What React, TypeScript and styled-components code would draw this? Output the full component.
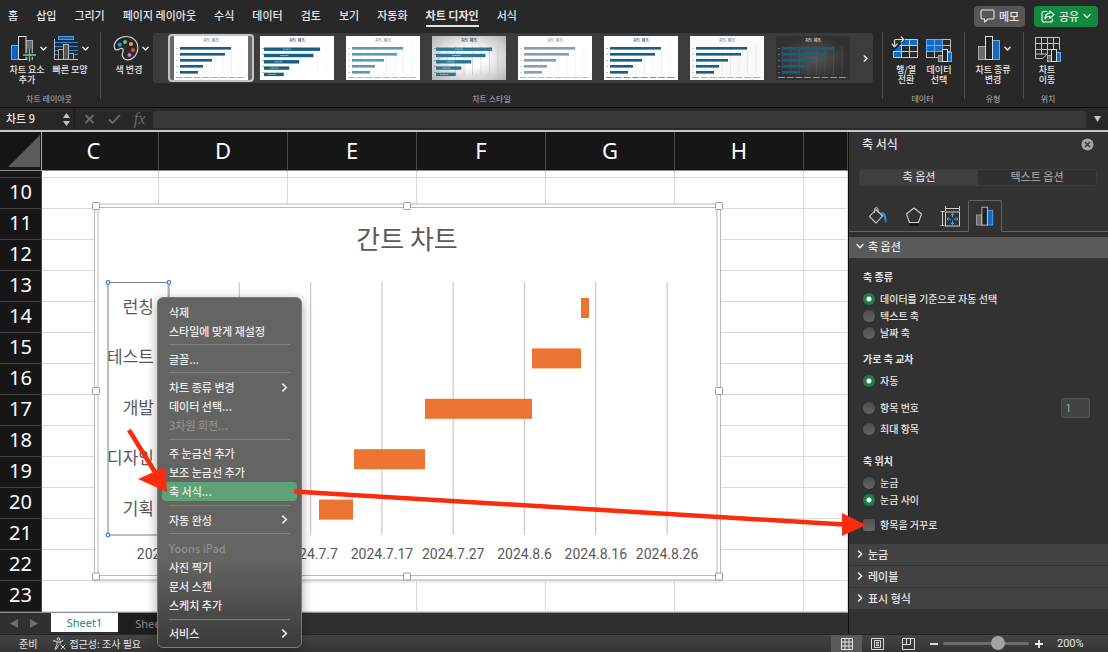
import React from "react";
import styled, { createGlobalStyle, css } from "styled-components";

const GlobalStyle = createGlobalStyle`
  *, *::before, *::after { box-sizing: border-box; }
  body {
    margin: 0;
    background: #282828;
    color: #e6e6e6;
    font-family: "Noto Sans CJK KR", "Noto Sans", sans-serif;
    font-size: 11px;
    line-height: 16px;
  }
  button, input { font: inherit; color: inherit; margin: 0; padding: 0; border: 0; background: none; }
  svg { display: block; flex: none; }
`;

const latin = `Inter, "Noto Sans CJK KR", sans-serif`;

/* ---------- window frame ---------- */

const Window = styled.div`
  position: relative;
  display: flex;
  flex-direction: column;
  min-height: 100vh;
  overflow: hidden;
`;

const TabBar = styled.header`
  display: flex;
  align-items: center;
  justify-content: space-between;
  height: 32px;
  padding: 0 10px 0 8px;
`;

const Tabs = styled.nav`
  display: flex;
  gap: 18px;
`;

const Tab = styled.button<{ $active?: boolean }>`
  height: 21px;
  white-space: nowrap;
  font-weight: ${(p) => (p.$active ? 700 : 500)};
  border-bottom: 2px solid ${(p) => (p.$active ? "#e4e4e4" : "transparent")};
`;

const Actions = styled.div`
  display: flex;
  gap: 9px;
`;

const ActionButton = styled.button<{ $primary?: boolean }>`
  display: flex;
  align-items: center;
  justify-content: center;
  gap: 4px;
  width: ${(p) => (p.$primary ? 64 : 51)}px;
  height: 21px;
  border-radius: 4px;
  white-space: nowrap;
  font-weight: 500;
  background: ${(p) => (p.$primary ? "#12893e" : "#565656")};
`;

/* ---------- ribbon ---------- */

const Ribbon = styled.section`
  display: flex;
  height: 76px;
  border-bottom: 1px solid #0c0c0c;
`;

const Group = styled.div<{ $width?: number }>`
  display: flex;
  flex-direction: column;
  justify-content: space-between;
  ${(p) => (p.$width ? css`flex: none; width: ${p.$width}px;` : css`flex: 1; min-width: 0;`)}
  height: 75px;
  padding-bottom: 2px;
`;

const Divider = styled.div`
  flex: none;
  width: 1px;
  height: 67px;
  background: #4c4c4c;
`;

const GroupBody = styled.div<{ $pad?: number; $gap?: number }>`
  display: flex;
  gap: ${(p) => p.$gap ?? 1}px;
  padding-left: ${(p) => p.$pad ?? 8}px;
`;

const GroupLabel = styled.div<{ $shift?: number }>`
  padding-right: ${(p) => p.$shift ?? 0}px;
  text-align: center;
  font-size: 8px;
  line-height: 12px;
  color: #b4b4b4;
`;

const Tool = styled.button<{ $width: number; $inset?: number }>`
  display: flex;
  flex-direction: column;
  gap: 3px;
  width: ${(p) => p.$width}px;
  padding-top: 3px;
  text-align: left;

  > span:first-child {
    display: flex;
    align-items: center;
    gap: 3px;
    padding-left: ${(p) => p.$inset ?? 4}px;
  }
  > span:last-child {
    width: 38px;
    text-align: center;
    white-space: pre;
    font-size: 9px;
    line-height: 10px;
    font-weight: 500;
  }
`;

const Gallery = styled.div`
  display: flex;
  align-items: center;
  justify-content: space-between;
  flex: 1;
  min-width: 0;
  height: 50px;
  margin: 1px 9px 0 2px;
  padding-left: 15px;
  border-radius: 3px;
  background: #3c3c3c;
  overflow: hidden;
`;

const ThumbRow = styled.div`
  display: flex;
  min-width: 0;
  overflow: hidden;
`;

const ThumbButton = styled.button<{ $selected?: boolean }>`
  flex: none;
  width: 86px;
  height: 48px;
  padding: 0 4px;
  border: 2px solid ${(p) => (p.$selected ? "#c4c4c4" : "transparent")};
  border-radius: 4px;
  background: ${(p) => (p.$selected ? "#6a6a6a" : "none")};
`;

const MoreButton = styled.button`
  display: flex;
  align-items: center;
  justify-content: center;
  width: 15px;
  height: 100%;
`;

/* ---------- formula bar ---------- */

const FormulaBar = styled.section`
  display: flex;
  align-items: center;
  height: 24px;
  border-bottom: 2px solid #c6c6c6;
`;

const NameBox = styled.input`
  width: 59px;
  height: 20px;
  padding: 0 0 2px 6px;
  font-weight: 500;
  outline: none;
`;

const Stepper = styled.button`
  display: flex;
  flex-direction: column;
  align-items: center;
  justify-content: center;
  gap: 3px;
  width: 16px;
  height: 22px;
  margin-right: 2px;
  border-right: 1px solid #1c1c1c;
`;

const FormulaButton = styled.button`
  display: flex;
  align-items: center;
  justify-content: center;
  width: 25px;
  height: 20px;
  color: #6a6a6a;
  font: italic 16px "Liberation Serif", serif;
`;

const FormulaInput = styled.input`
  flex: 1;
  min-width: 0;
  height: 17px;
  margin-left: 1px;
  border-radius: 2px;
  background: #393939;
`;

const ExpandButton = styled.button`
  display: flex;
  align-items: center;
  justify-content: center;
  width: 22px;
  height: 20px;
`;

/* ---------- worksheet ---------- */

const Main = styled.main`
  display: flex;
  flex: 1;
`;

const Workbook = styled.section`
  position: relative;
  display: flex;
  flex-direction: column;
  flex: 1;
  min-width: 0;
  overflow: hidden;
`;

const Grid = styled.table`
  width: 100%;
  table-layout: fixed;
  border-collapse: separate;
  border-spacing: 0;
  background: #fff;
  font-family: "Noto Sans", sans-serif;
  color: #fff;

  th, td { padding: 0; font-weight: 400; overflow: hidden; }
  thead th {
    height: 39px;
    background: #161616;
    border-right: 1px solid #4a4a4a;
    border-bottom: 1px solid #8c8c8c;
    padding-bottom: 2px;
    font-size: 22px;
    line-height: 30px;
  }
  thead th:first-child { border-right-color: #b0b0b0; padding: 0 0 0 8px; }
  tbody th {
    height: 31px;
    background: #161616;
    border-bottom: 1px solid #444;
    border-right: 1px solid #444;
    padding-bottom: 2px;
    font-size: 20px;
    line-height: 28px;
  }
  tbody td { border-right: 1px solid #dadada; border-bottom: 1px solid #dadada; }
  tbody tr:first-child > * { height: 7px; padding: 0; }
`;

const ClippedHeader = styled.th`
  && { padding-right: 13px; }
`;

const ChartObject = styled.figure`
  position: absolute;
  top: 70px;
  left: 92px;
  margin: 0;
`;

const SheetTabs = styled.div`
  display: flex;
  flex: 1;
  min-height: 22px;
  background: #303030;
  border-top: 1px solid #8f8f8f;
`;

const SheetNav = styled.div`
  display: flex;
  align-items: center;
  gap: 12px;
  width: 51px;
  height: 21px;
  padding-left: 10px;
`;

const SheetTab = styled.button<{ $active?: boolean }>`
  width: ${(p) => (p.$active ? 67 : 70)}px;
  height: ${(p) => (p.$active ? 19 : 21)}px;
  font-family: "Noto Sans", sans-serif;
  font-size: 11px;
  color: ${(p) => (p.$active ? "#2c8a55" : "#8c8c8c")};
  background: ${(p) => (p.$active ? "#fff" : "#1e1e1e")};
`;

/* ---------- format panel ---------- */

const Panel = styled.aside`
  flex: none;
  width: 260px;
  border-left: 1px solid #0d0d0d;
  background: #323232;
`;

const PanelHead = styled.div`
  display: flex;
  align-items: center;
  justify-content: space-between;
  height: 24px;
  padding: 0 14px 0 13px;
  font-size: 12px;
  font-weight: 500;
`;

const CloseButton = styled.button`
  display: flex;
`;

const Segments = styled.div`
  display: flex;
  height: 17px;
  margin: 13px 11px 0 10px;
  border-radius: 4px;
  border: 1px solid #3d3d3d;
  overflow: hidden;
`;

const Segment = styled.button<{ $active?: boolean }>`
  flex: 1;
  padding-bottom: 3px;
  line-height: 12px;
  font-weight: 500;
  color: ${(p) => (p.$active ? "#d6d6d6" : "#9c9c9c")};
  background: ${(p) => (p.$active ? "#3f3f3f" : "#303030")};
`;

const IconTabs = styled.div`
  display: flex;
  height: 32px;
  margin-top: 14px;
  padding-left: 11px;
  border-bottom: 1px solid #626262;
`;

const IconTab = styled.button<{ $active?: boolean }>`
  display: flex;
  align-items: center;
  justify-content: center;
  width: 36px;
  height: 32px;
  ${(p) =>
    p.$active &&
    css`
      width: 34px;
      border: 1px solid #626262;
      border-bottom-color: #323232;
      border-radius: 2px 2px 0 0;
    `}
`;

const SectionButton = styled.button<{ $open?: boolean }>`
  display: flex;
  align-items: center;
  gap: 4px;
  width: 100%;
  height: ${(p) => (p.$open ? 21 : 22)}px;
  margin-top: ${(p) => (p.$open ? 5 : 0)}px;
  padding: 0 0 2px 7px;
  font-weight: 500;
  background: ${(p) => (p.$open ? "#5a5a5a" : "#424242")};
  border-bottom: 1px solid ${(p) => (p.$open ? "#5a5a5a" : "#343434")};

  svg { width: 8px; }
`;

const Options = styled.div`
  display: flex;
  flex-direction: column;
  padding: 11px 18px 11px 14px;
  font-size: 10px;
`;

const Heading = styled.h3`
  margin: 0 0 6px;
  font-size: 10px;
  line-height: 16px;
  font-weight: 700;
`;

const Choices = styled.div<{ $gap?: number; $after?: number }>`
  display: flex;
  flex-direction: column;
  gap: ${(p) => p.$gap ?? 1}px;
  margin-bottom: ${(p) => p.$after ?? 9}px;
`;

const ChoiceRow = styled.div`
  display: flex;
  align-items: center;
  justify-content: space-between;
`;

const Choice = styled.label`
  display: flex;
  align-items: center;
  gap: 5px;
  height: 16px;
  font-weight: 500;
`;

const Radio = styled.input.attrs({ type: "radio" })`
  appearance: none;
  width: 12px;
  height: 12px;
  border-radius: 50%;
  background: linear-gradient(#4c4c4c, #646464);
  &:checked { background: radial-gradient(circle, #fff 0 2px, #1d7d46 3px); }
`;

const Check = styled.input.attrs({ type: "checkbox" })`
  appearance: none;
  width: 12px;
  height: 12px;
  border-radius: 3px;
  background: linear-gradient(#525252, #686868);
`;

const NumberBox = styled.input`
  width: 29px;
  height: 20px;
  padding-left: 4px;
  border: 1px solid #555;
  border-radius: 3px;
  background: #424242;
  color: #a8a8a8;
  font-family: ${latin};
`;

/* ---------- status bar ---------- */

const StatusBar = styled.footer`
  display: flex;
  align-items: center;
  justify-content: space-between;
  height: 18px;
  padding: 0 21px 0 19px;
  border-top: 1px solid #262626;
  background: linear-gradient(#444, #343434);
  font-size: 10px;
`;

const StatusSide = styled.div`
  display: flex;
  align-items: center;
`;

const StatusButton = styled.button`
  display: flex;
  align-items: center;
  gap: 3px;
  margin-left: 16px;
`;

const ViewButton = styled.button<{ $active?: boolean }>`
  display: flex;
  align-items: center;
  justify-content: center;
  width: 31px;
  height: 17px;
  background: ${(p) => (p.$active ? "#5a5a5a" : "none")};
`;

const ZoomButton = styled.button`
  display: flex;
  margin: 0 5px 0 6px;
`;

const ZoomSlider = styled.input.attrs({ type: "range" })`
  appearance: none;
  width: 86px;
  height: 14px;
  &::-webkit-slider-runnable-track { height: 3px; border-radius: 2px; background: #6d6d6d; }
  &::-webkit-slider-thumb {
    appearance: none;
    width: 14px;
    height: 14px;
    margin-top: -6px;
    border-radius: 50%;
    background: #a2a2a2;
  }
`;

const ZoomValue = styled.output`
  width: 30px;
  margin-left: 9px;
  font-family: Roboto, sans-serif;
  font-size: 11px;
`;

/* ---------- context menu ---------- */

const Menu = styled.div`
  position: absolute;
  top: 297px;
  left: 157px;
  display: flex;
  flex-direction: column;
  width: 145px;
  height: 351px;
  padding: 4px;
  border: 1px solid #7b7b79;
  border-radius: 6px;
  background: linear-gradient(#646462 0 75%, #3a3a38);
  box-shadow: 0 3px 12px rgba(0, 0, 0, 0.35);
`;

const MenuItem = styled.button<{ $active?: boolean }>`
  display: flex;
  align-items: center;
  justify-content: space-between;
  height: 19px;
  padding: 0 8px 0 7px;
  border-radius: 4px;
  font-weight: 500;
  white-space: nowrap;
  color: #ececec;
  background: ${(p) => (p.$active ? "#5fa278" : "none")};
  &:disabled { color: #8f8f8d; }
`;

const Separator = styled.div`
  display: flex;
  align-items: center;
  flex: 1;
  padding: 0 7px;
  &::after { content: ""; flex: 1; height: 1px; background: #80807e; }
`;

const Arrows = styled.svg`
  position: absolute;
  top: 0;
  left: 0;
  pointer-events: none;
`;

/* ---------- icons ---------- */

type ChevronProps = { dir?: "down" | "right"; size?: number; weight?: number };
const Chevron = ({ dir = "down", size = 7, weight = 1.6 }: ChevronProps) => (
  <svg width={size} height={size} viewBox="0 0 8 8" fill="none" stroke="#ececec" strokeWidth={weight} strokeLinecap="round" strokeLinejoin="round">
    <path d={dir === "down" ? "M1 2.5 4 5.7 7 2.5" : "M2.5 1 5.7 4 2.5 7"} />
  </svg>
);

const Triangle = ({ points, color = "#c4c4c4", w = 7, h = 5 }: { points: string; color?: string; w?: number; h?: number }) => (
  <svg width={w} height={h} viewBox={`0 0 ${w} ${h}`}>
    <polygon points={points} fill={color} />
  </svg>
);

const AddElementIcon = () => (
  <svg width="26" height="27" viewBox="0 0 26 27" fill="none">
    <rect x="14" y="5.5" width="7.5" height="19" fill="#6b6b6b" stroke="#a9a9a9" />
    <rect x="0.5" y="10.5" width="7" height="14" fill="#0a64bd" stroke="#6aaef0" />
    <rect x="7.5" y="1.5" width="7.5" height="23" fill="#222" stroke="#dcdcdc" />
    <path d="M18.5 13.5v13M12 20h13" stroke="#222" strokeWidth="3.6" />
    <path d="M18.5 13.5v13M12 20h13" stroke="#6fd38a" strokeWidth="1.3" />
  </svg>
);

const QuickLayoutIcon = () => (
  <svg width="26" height="27" viewBox="0 0 26 27" fill="none">
    <rect x="5.5" y="1.5" width="15" height="3" fill="#0a64bd" stroke="#4b9be8" />
    <path d="M2 7.5h23M2 11.5h23M2 15.5h23M2 19.5h23" stroke="#2f87d6" />
    <rect x="5.5" y="14.5" width="5" height="10" fill="#2a2a2a" stroke="#a9a9a9" />
    <rect x="15.5" y="18.5" width="5" height="6" fill="#2a2a2a" stroke="#a9a9a9" />
    <rect x="10.5" y="9.5" width="5" height="15" fill="#555" stroke="#b9b9b9" />
    <path d="M1.5 4v20.5H25" stroke="#bdbdbd" />
  </svg>
);

const PaletteIcon = () => (
  <svg width="26" height="27" viewBox="0 0 26 27" fill="none">
    <path
      d="M13 1.5C6.500 1.500 1.200 6 1.200 11.500c0 2 1.300 3.300 2.800 3.300 2.500 0 2.800-2 4.800-1.500 2 .6 1.600 2.600.8 4.500-1 2.700.2 5.800 3.400 6.900 5.800 1.500 11.800-4.700 11.800-12 0-6.700-5-11.200-11.800-11.200Z"
      stroke="#d4d4d4"
      strokeWidth="1.2"
    />
    <circle cx="6.8" cy="9.8" r="2" fill="#3b8fe0" />
    <circle cx="12" cy="7" r="2" fill="#5cc47a" />
    <circle cx="18" cy="9" r="2" fill="#f0a04b" />
    <circle cx="20" cy="15" r="2" fill="#e5484d" />
    <circle cx="16.5" cy="20" r="2" fill="#c07bd8" />
  </svg>
);

const SwapIcon = () => (
  <svg width="28" height="27" viewBox="0 0 28 27" fill="none">
    <path d="M9.5 4.5h17v6h-17zM2.5 10.5h8v12h-8z" fill="#0f6bc6" />
    <path d="M2.5 10.5h24M2.5 16.5h24M2.5 22.5h24M10.5 4.5v18M18.5 4.5v18M2.5 10.5v12M9.5 4.5h17v18" stroke="#c9c9c9" />
    <path d="M0 0h14v5L3 16H0Z" fill="#282828" />
    <path d="M3.5 11.5v-6q0-1 1-1h8M.7 8.600l2.800 3.200 3-3.200M9.800 1.400l3 3-3 3" stroke="#dcdcdc" strokeWidth="1.2" />
  </svg>
);

const SelectDataIcon = () => (
  <svg width="28" height="27" viewBox="0 0 28 27" fill="none">
    <path d="M1.5 4.500h16v12h-16z" fill="#0f6bc6" />
    <path d="M1.5 4.500h24v18h-24zM1.500 10.500h24M1.500 16.500h24M9.500 4.500v18M17.500 4.500v18" stroke="#bcbcbc" />
    <path d="M1.5 4.500h16v12h-16zM9.500 4.500v12M1.500 10.500h16" stroke="#6aaef0" />
    <rect x="13.5" y="20.5" width="5" height="6" fill="#6b6b6b" stroke="#a9a9a9" />
    <rect x="22.5" y="17.5" width="4" height="9" fill="#0f6bc6" stroke="#6aaef0" />
    <rect x="17.5" y="14.5" width="5" height="12" fill="#222" stroke="#dcdcdc" />
  </svg>
);

const BarsIcon = ({ w = 23, h = 27 }: { w?: number; h?: number }) => (
  <svg width={w} height={h} viewBox="0 0 23 27" fill="none">
    <rect x="0.5" y="11.5" width="7" height="13" fill="#6b6b6b" stroke="#a9a9a9" />
    <rect x="14.5" y="5.5" width="7" height="19" fill="#0f6bc6" stroke="#6aaef0" />
    <rect x="7.5" y="1.5" width="7" height="23" fill="#222" stroke="#dcdcdc" />
  </svg>
);

const MoveChartIcon = () => (
  <svg width="28" height="27" viewBox="0 0 28 27" fill="none">
    <path d="M1.5 2.500h24V15M1.500 2.500v21h7l4-3.500v-1h-11M1.500 8.500h24M1.500 14.500h17M7.500 2.500v17M13.500 2.500v17M19.500 2.500v12" stroke="#c4c4c4" />
    <rect x="13.5" y="20.5" width="5" height="6" fill="#6b6b6b" stroke="#a9a9a9" />
    <rect x="22.5" y="17.5" width="4" height="9" fill="#0f6bc6" stroke="#6aaef0" />
    <rect x="17.5" y="14.5" width="5" height="12" fill="#222" stroke="#dcdcdc" />
  </svg>
);

const BubbleIcon = () => (
  <svg width="15" height="14" viewBox="0 0 15 14" fill="none" stroke="#e6e6e6" strokeWidth="1.1" strokeLinejoin="round">
    <path d="M2.5 1h10A1.500 1.500 0 0 1 14 2.500v6a1.500 1.500 0 0 1-1.500 1.500H8l-3.500 3v-3h-2A1.500 1.500 0 0 1 1 8.500v-6A1.500 1.500 0 0 1 2.500 1Z" />
  </svg>
);

const ShareIcon = () => (
  <svg width="14" height="13" viewBox="0 0 14 13" fill="none" stroke="#fff" strokeWidth="1.1" strokeLinejoin="round" strokeLinecap="round">
    <path d="M6 1.500H3a2 2 0 0 0-2 2V10a2 2 0 0 0 2 2h6.500a2 2 0 0 0 2-2V9" />
    <path d="M8.800 1 13 4.700 8.800 8.300V6.200C6.500 6.200 5 7 4 9c0-3 1.600-5.600 4.800-5.900Z" />
  </svg>
);

const FillIcon = () => (
  <svg width="20" height="20" viewBox="0 0 20 20" fill="none">
    <path d="m8 3.500 6.500 6.500L8 17 1.500 10.500Z" stroke="#cfcfcf" strokeWidth="1.1" />
    <path d="M6.500 7V3.500a1.800 1.800 0 0 1 3.600 0V7" stroke="#cfcfcf" />
    <path d="M12 6.500c4.500-1 7 1.500 6.500 10.500-2-1-2.500-3.500-2.500-6Z" fill="#2f8fe0" />
  </svg>
);

const PentagonIcon = () => (
  <svg width="20" height="20" viewBox="0 0 20 20" fill="none">
    <path d="M5 18.500h10" stroke="#111" strokeWidth="2" />
    <path d="m10 2 7.500 6-3 8.500h-9L2.500 8Z" stroke="#cfcfcf" strokeWidth="1.1" />
  </svg>
);

const SizeIcon = () => (
  <svg width="21" height="21" viewBox="0 0 21 21" fill="none">
    <path d="M5.500 2.500h14M5.500 0v5M19.500 0v5M2.500 5.500v14M.5 5.500h4M.5 19.500h4" stroke="#cfcfcf" />
    <rect x="5.500" y="6" width="14" height="14" stroke="#cfcfcf" />
    <path d="M12.500 7.500v4M12.500 14.500v4M7 13h4M14 13h4M10.800 9.200l1.700-1.700 1.700 1.700M10.800 16.800l1.700 1.700 1.700-1.700M8.700 11.300 7 13l1.700 1.700M16.300 11.300 18 13l-1.700 1.700" stroke="#4aa3ee" />
  </svg>
);

const AccessIcon = () => (
  <svg width="13" height="13" viewBox="0 0 13 13" fill="none" stroke="#d6d6d6" strokeLinecap="round" strokeLinejoin="round">
    <circle cx="5.5" cy="2" r="1.3" />
    <path d="M1 3.500 4 5v2.500L2 12l1 .3L5.500 8.500M10 3.500 7 5v2M1 3.500l-.2 1M4 5h3M8 8l4 4M12 8l-4 4" />
  </svg>
);

/* ---------- chart style thumbnails ---------- */

type ThumbStyle = {
  bar: string;
  paper: string;
  title: string;
  line: string;
  thick?: boolean;
};

const thumbStyles: ThumbStyle[] = [
  { bar: "#155f83", paper: "#fff", title: "#666", line: "#e2e2e2" },
  { bar: "#155f83", paper: "#fff", title: "#222", line: "#eee", thick: true },
  { bar: "#5e98b3", paper: "#fff", title: "#777", line: "#e2e2e2" },
  { bar: "#2b7697", paper: "url(#paperGrey)", title: "#222", line: "#b4b4b4", thick: true },
  { bar: "#879eb0", paper: "#fff", title: "#888", line: "#e8e8e8" },
  { bar: "#155f83", paper: "#fff", title: "#15304d", line: "#d6e4ee" },
  { bar: "#155f83", paper: "#fafafa", title: "#777", line: "#dedede" },
  { bar: "#155f83", paper: "url(#paperDark)", title: "#eee", line: "#5a5a5a" },
];

const barLengths = [51, 45, 32, 23, 18];

const Thumb = ({ bar, paper, title, line, thick }: ThumbStyle) => (
  <svg width="74" height="44" viewBox="0 0 74 44">
    <defs>
      <radialGradient id="paperGrey" r="0.7">
        <stop offset="0.3" stopColor="#fff" />
        <stop offset="1" stopColor="#b4b4b4" />
      </radialGradient>
      <radialGradient id="paperDark">
        <stop offset="0" stopColor="#565656" />
        <stop offset="1" stopColor="#303030" />
      </radialGradient>
    </defs>
    <rect width="74" height="44" fill={paper} />
    <text x="37" y="6" fontSize="4" fontWeight="500" textAnchor="middle" fill={title}>차트 제목</text>
    {Array.from({ length: 8 }, (_, i) => (
      <path key={i} d={`M${6.5 + i * 8.5} 10v29`} stroke={line} strokeWidth="0.5" />
    ))}
    {barLengths.map((w, i) => (
      <g key={i}>
        <rect x={thick ? 4 : 6} y={(thick ? 11.5 : 11) + i * (thick ? 6.3 : 6)} width={thick ? w * 1.1 : w} height={thick ? 3.4 : 2.6} fill={bar} />
        {thick && <path d={`M${w * 0.45} ${13.2 + i * 6.3}h8`} stroke="#cfe0e8" strokeWidth="0.8" strokeDasharray="1 .4" />}
        <path d={`M2.5 ${12.5 + i * 6}h1`} stroke={title} strokeWidth="0.7" />
      </g>
    ))}
    {!thick && <path d="M2 41.500h70" stroke={title} strokeWidth="0.8" strokeDasharray="7 1.7" opacity="0.7" />}
  </svg>
);

/* ---------- gantt chart ---------- */

const tasks = [
  { name: "런칭", start: 489, length: 8 },
  { name: "테스트", start: 440, length: 49 },
  { name: "개발", start: 333, length: 107 },
  { name: "디자인", start: 262, length: 71 },
  { name: "기획", start: 227, length: 34 },
];
const dates = ["2024.6.17", "2024.6.27", "2024.7.7", "2024.7.17", "2024.7.27", "2024.8.6", "2024.8.16", "2024.8.26"];

const GanttChart = () => (
  <svg width="632" height="382" viewBox="0 0 632 382">
    <rect x="2.5" y="2" width="626" height="376" fill="#fff" stroke="#b9b9b9" />
    <path d="M2 380h628" stroke="#ddd" />
    <rect x="6" y="5.5" width="619" height="368" fill="#fff" stroke="#b9b9b9" />
    <text x="315" y="47" fontSize="26" textAnchor="middle" fill="#595959">간트 차트</text>
    {dates.map((d, i) => (
      <g key={d}>
        <path d={`M${76 + i * 71.3} 80v253`} stroke="#c9c9c9" strokeWidth="1.2" />
        <text x={76 + i * 71.3} y="357" fontSize="14" fontFamily="Roboto, sans-serif" textAnchor="middle" fill="#595959">{d}</text>
      </g>
    ))}
    {tasks.map((t, i) => (
      <g key={t.name}>
        <rect x={t.start} y={96 + i * 50.4} width={t.length} height="20" fill="#ec7331" />
        <text x="62" y={111 + i * 50.4} fontSize="17" textAnchor="end" fill="#595959">{t.name}</text>
      </g>
    ))}
    <rect x="16" y="80.5" width="61" height="252.5" fill="none" stroke="#7f7f7f" />
    {[[16, 80.5], [77, 80.5], [16, 333], [77, 333]].map(([x, y]) => (
      <circle key={`${x}-${y}`} cx={x} cy={y} r="1.8" fill="#fff" stroke="#2f86d8" strokeWidth="1.2" />
    ))}
    {[4, 315, 627].flatMap((x) =>
      [4, 189, 374.5].filter((y) => !(x === 315 && y === 189)).map((y) => (
        <rect key={`${x}-${y}`} x={x - 3.5} y={y - 3.5} width="7" height="7" rx="1" fill="#fff" stroke="#9a9a9a" />
      )),
    )}
  </svg>
);

/* ---------- content ---------- */

const ribbonTabs = ["홈", "삽입", "그리기", "페이지 레이아웃", "수식", "데이터", "검토", "보기", "자동화", "차트 디자인", "서식"];
const columns = ["C", "D", "E", "F", "G", "H"];
const rows = Array.from({ length: 14 }, (_, i) => i + 10);

type Entry = { text: string; sub?: boolean; off?: boolean; active?: boolean };
const menuGroups: Entry[][] = [
  [{ text: "삭제" }, { text: "스타일에 맞게 재설정" }],
  [{ text: "글꼴..." }],
  [{ text: "차트 종류 변경", sub: true }, { text: "데이터 선택..." }, { text: "3차원 회전...", off: true }],
  [{ text: "주 눈금선 추가" }, { text: "보조 눈금선 추가" }, { text: "축 서식...", active: true }],
  [{ text: "자동 완성", sub: true }],
  [{ text: "Yoons iPad", off: true }, { text: "사진 찍기" }, { text: "문서 스캔" }, { text: "스케치 추가" }],
  [{ text: "서비스", sub: true }],
];

type RibbonToolProps = { icon: React.ReactNode; label: string; menu?: boolean; width: number; inset?: number };
const RibbonTool = ({ icon, label, menu, width, inset }: RibbonToolProps) => (
  <Tool $width={width} $inset={inset}>
    <span>{icon}{menu && <Chevron />}</span>
    <span>{label}</span>
  </Tool>
);

export default function App() {
  return (
    <Window>
      <GlobalStyle />
      <TabBar>
        <Tabs>
          {ribbonTabs.map((t) => (
            <Tab key={t} $active={t === "차트 디자인"}>{t}</Tab>
          ))}
        </Tabs>
        <Actions>
          <ActionButton><BubbleIcon />메모</ActionButton>
          <ActionButton $primary><ShareIcon />공유<Chevron size={8} weight={1.2} /></ActionButton>
        </Actions>
      </TabBar>

      <Ribbon>
        <Group $width={100}>
          <GroupBody>
            <RibbonTool icon={<AddElementIcon />} label={"차트 요소\n추가"} menu width={42} inset={3} />
            <RibbonTool icon={<QuickLayoutIcon />} label="빠른 모양" menu width={42} inset={2} />
          </GroupBody>
          <GroupLabel $shift={2}>차트 레이아웃</GroupLabel>
        </Group>
        <Divider />
        <Group>
          <GroupBody $pad={9}>
            <RibbonTool icon={<PaletteIcon />} label="색 변경" menu width={40} inset={3} />
            <Gallery>
              <ThumbRow>
                {thumbStyles.map((s, i) => (
                  <ThumbButton key={i} $selected={i === 0} aria-label={`스타일 ${i + 1}`}>
                    <Thumb {...s} />
                  </ThumbButton>
                ))}
              </ThumbRow>
              <MoreButton aria-label="스타일 더 보기"><Chevron dir="right" size={7} /></MoreButton>
            </Gallery>
          </GroupBody>
          <GroupLabel>차트 스타일</GroupLabel>
        </Group>
        <Divider />
        <Group $width={81}>
          <GroupBody $pad={4} $gap={0}>
            <RibbonTool icon={<SwapIcon />} label={"행/열\n전환"} width={33} inset={4} />
            <RibbonTool icon={<SelectDataIcon />} label={"데이터\n선택"} width={33} inset={5} />
          </GroupBody>
          <GroupLabel $shift={2}>데이터</GroupLabel>
        </Group>
        <Divider />
        <Group $width={58}>
          <GroupBody $pad={9}>
            <RibbonTool icon={<BarsIcon />} label={"차트 종류\n변경"} menu width={42} />
          </GroupBody>
          <GroupLabel $shift={2}>유형</GroupLabel>
        </Group>
        <Divider />
        <Group $width={84}>
          <GroupBody $pad={4}>
            <RibbonTool icon={<MoveChartIcon />} label={"차트\n이동"} width={38} inset={6} />
          </GroupBody>
          <GroupLabel $shift={36}>위치</GroupLabel>
        </Group>
      </Ribbon>

      <FormulaBar>
        <NameBox aria-label="이름 상자" defaultValue="차트 9" />
        <Stepper aria-label="이름 이동">
          <Triangle points="3.5,0 7,5 0,5" />
          <Triangle points="0,0 7,0 3.5,5" />
        </Stepper>
        <FormulaButton aria-label="취소">
          <svg width="11" height="10" viewBox="0 0 11 10" stroke="#6a6a6a" strokeWidth="1.8"><path d="m1.500 1 8 8M9.500 1l-8 8" /></svg>
        </FormulaButton>
        <FormulaButton aria-label="입력">
          <svg width="13" height="10" viewBox="0 0 13 10" fill="none" stroke="#6a6a6a" strokeWidth="1.8"><path d="M1 5.500 4.500 9 12 1" /></svg>
        </FormulaButton>
        <FormulaButton>fx</FormulaButton>
        <FormulaInput aria-label="수식 입력줄" />
        <ExpandButton aria-label="수식 입력줄 확장"><Triangle points="0,0 7,0 3.5,6" h={6} /></ExpandButton>
      </FormulaBar>

      <Main>
        <Workbook>
          <Grid>
            <colgroup>
              <col width="42" />
              <col width="117" />
              {columns.slice(1).map((c) => <col key={c} width="129" />)}
              <col />
            </colgroup>
            <thead>
              <tr>
                <th>
                  <svg width="32" height="32" viewBox="0 0 32 32"><path d="M32 0v32H0Z" fill="#5c5c5c" /></svg>
                </th>
                <ClippedHeader>C</ClippedHeader>
                {columns.slice(1).map((c) => <th key={c}>{c}</th>)}
                <th />
              </tr>
            </thead>
            <tbody>
              <tr><th />{columns.map((c) => <td key={c} />)}<td /></tr>
              {rows.map((r) => (
                <tr key={r}><th>{r}</th>{columns.map((c) => <td key={c} />)}<td /></tr>
              ))}
            </tbody>
          </Grid>
          <ChartObject><GanttChart /></ChartObject>
          <SheetTabs>
            <SheetNav>
              <Triangle points="8,0 8,9 0,4.5" w={8} h={9} color="#6e6e6e" />
              <Triangle points="0,0 8,4.5 0,9" w={8} h={9} color="#6e6e6e" />
            </SheetNav>
            <SheetTab $active>Sheet1</SheetTab>
            <SheetTab>Sheet2</SheetTab>
          </SheetTabs>
        </Workbook>

        <Panel>
          <PanelHead>
            축 서식
            <CloseButton aria-label="닫기">
              <svg width="13" height="13" viewBox="0 0 13 13"><circle cx="6.500" cy="6.500" r="6" fill="#a6a6a6" /><path d="m4 4 5 5M9 4 4 9" stroke="#323232" strokeWidth="1.4" /></svg>
            </CloseButton>
          </PanelHead>
          <Segments>
            <Segment $active>축 옵션</Segment>
            <Segment>텍스트 옵션</Segment>
          </Segments>
          <IconTabs>
            <IconTab aria-label="채우기"><FillIcon /></IconTab>
            <IconTab aria-label="효과"><PentagonIcon /></IconTab>
            <IconTab aria-label="크기"><SizeIcon /></IconTab>
            <IconTab $active aria-label="축 옵션"><BarsIcon w={18} h={21} /></IconTab>
          </IconTabs>
          <SectionButton $open><Chevron size={8} weight={1.4} />축 옵션</SectionButton>
          <Options>
            <Heading>축 종류</Heading>
            <Choices $after={10}>
              <Choice><Radio name="kind" defaultChecked />데이터를 기준으로 자동 선택</Choice>
              <Choice><Radio name="kind" />텍스트 축</Choice>
              <Choice><Radio name="kind" />날짜 축</Choice>
            </Choices>
            <Heading>가로 축 교차</Heading>
            <Choices>
              <Choice><Radio name="cross" defaultChecked />자동</Choice>
            </Choices>
            <Choices $gap={3} $after={16}>
              <ChoiceRow>
                <Choice><Radio name="cross" />항목 번호</Choice>
                <NumberBox aria-label="항목 번호 값" defaultValue="1" />
              </ChoiceRow>
              <Choice><Radio name="cross" />최대 항목</Choice>
            </Choices>
            <Heading>축 위치</Heading>
            <Choices>
              <Choice><Radio name="place" />눈금</Choice>
              <Choice><Radio name="place" defaultChecked />눈금 사이</Choice>
            </Choices>
            <Choice><Check />항목을 거꾸로</Choice>
          </Options>
          <SectionButton><Chevron dir="right" size={8} />눈금</SectionButton>
          <SectionButton><Chevron dir="right" size={8} />레이블</SectionButton>
          <SectionButton><Chevron dir="right" size={8} />표시 형식</SectionButton>
        </Panel>
      </Main>

      <StatusBar>
        <StatusSide>
          준비
          <StatusButton><AccessIcon />접근성: 조사 필요</StatusButton>
        </StatusSide>
        <StatusSide>
          <ViewButton $active aria-label="기본 보기">
            <svg width="12" height="12" viewBox="0 0 12 12" fill="none" stroke="#e6e6e6"><path d="M.5.5h11v11H.5zM.5 4h11M.5 8h11M4 .5v11M8 .5v11" /></svg>
          </ViewButton>
          <ViewButton aria-label="페이지 레이아웃 보기">
            <svg width="13" height="12" viewBox="0 0 13 12" fill="none" stroke="#dcdcdc"><path d="M.5.5h12v11H.5zM3.500 2.500h6v7h-6zM5 4.500h3M5 6h3M5 7.500h3" /></svg>
          </ViewButton>
          <ViewButton aria-label="페이지 나누기 보기">
            <svg width="13" height="12" viewBox="0 0 13 12" fill="none" stroke="#dcdcdc"><path d="M.5.5h12v11H.5zM4.500.5v6M8.500.5v6M.5 6.500h8" /></svg>
          </ViewButton>
          <ZoomButton aria-label="축소">
            <svg width="8" height="8" viewBox="0 0 8 8" stroke="#eee" strokeWidth="1.8"><path d="M0 4h8" /></svg>
          </ZoomButton>
          <ZoomSlider aria-label="확대/축소" min={0} max={100} defaultValue={67} />
          <ZoomButton aria-label="확대">
            <svg width="8" height="8" viewBox="0 0 8 8" stroke="#eee" strokeWidth="1.8"><path d="M0 4h8M4 0v8" /></svg>
          </ZoomButton>
          <ZoomValue>200%</ZoomValue>
        </StatusSide>
      </StatusBar>

      <Menu role="menu">
        {menuGroups.map((group, g) => (
          <React.Fragment key={g}>
            {g > 0 && <Separator role="separator" />}
            {group.map((m) => (
              <MenuItem key={m.text} role="menuitem" disabled={m.off} $active={m.active}>
                {m.text}
                {m.sub && <Chevron dir="right" size={9} weight={1.5} />}
              </MenuItem>
            ))}
          </React.Fragment>
        ))}
      </Menu>

      <Arrows width="870" height="540" viewBox="0 0 870 540" fill="#fb2b0b">
        <path d="M129 430 158 477M294 491.500l550 33" stroke="#fb2b0b" strokeWidth="4.5" />
        <polygon points="167,492 138,479 165,467" />
        <polygon points="866,525 842,513 842,536" />
      </Arrows>
    </Window>
  );
}
